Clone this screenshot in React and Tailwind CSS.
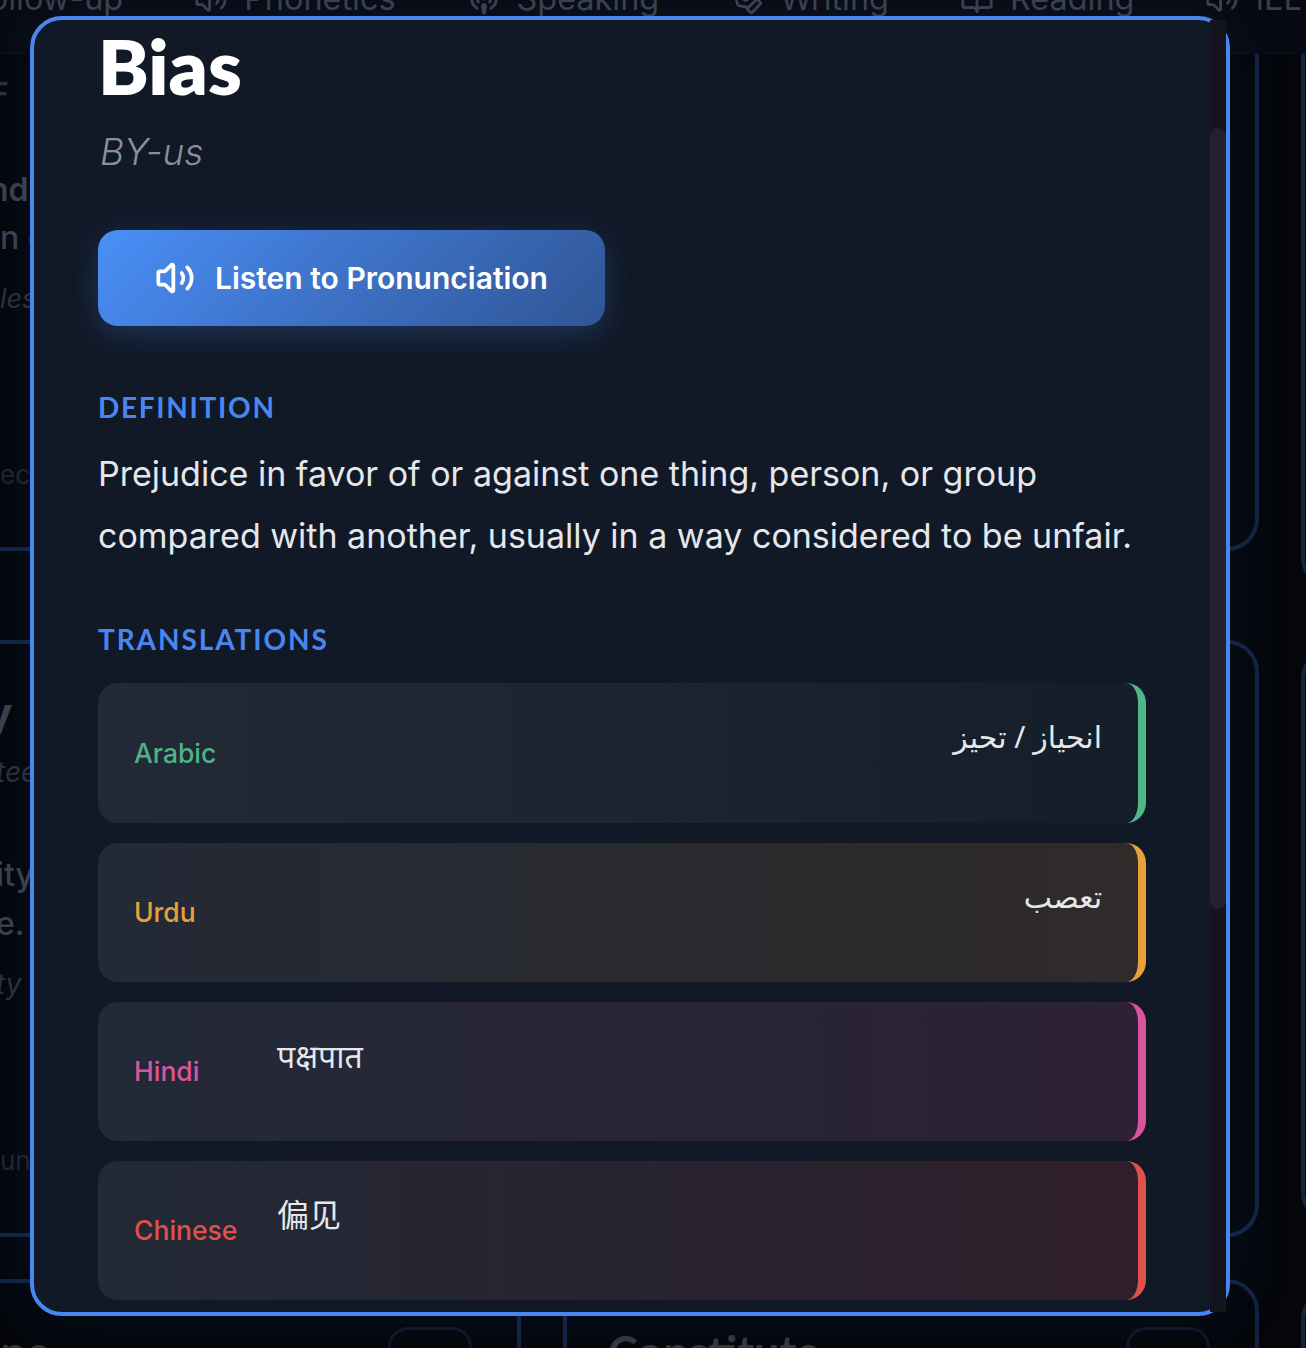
import React from "react";
import { Volume2, Podcast, PenTool, BookOpen } from "lucide-react";

const inter = "font-['Inter',sans-serif]";
const geo = "font-['Lato',sans-serif]";

const rows = [
  { lang: "Arabic", text: "انحياز / تحيز", rtl: true, size: "text-[30px]", label: "text-[#4fb286]", border: "border-[#52b788]", via: "via-[#1b2631]", bg: "to-[#141e28]", h: "h-[140px]" },
  { lang: "Urdu", text: "تعصب", rtl: true, size: "text-[30px]", label: "text-[#e8a13a]", border: "border-[#e8a13a]", via: "via-[#292a2f]", bg: "to-[#302b2b]", h: "h-[139px]" },
  { lang: "Hindi", text: "पक्षपात", rtl: false, size: "text-[32px]", label: "text-[#d9559e]", border: "border-[#d9559e]", via: "via-[#272538]", bg: "to-[#2d2037]", h: "h-[139px]" },
  { lang: "Chinese", text: "偏见", rtl: false, size: "text-[32px]", label: "text-[#e0514b]", border: "border-[#e0514b]", via: "via-[#272430]", bg: "to-[#2f1f2a]", h: "h-[139px]" },
];

const nav = [
  { t: "Follow-up" },
  { t: "Phonetics", I: Volume2 },
  { t: "Speaking", I: Podcast },
  { t: "Writing", I: PenTool },
  { t: "Reading", I: BookOpen },
  { t: "IELTS", I: Volume2 },
];

function Line({ children, cls }) {
  return <div className={`whitespace-nowrap ${cls}`}>{children}</div>;
}

function Card({ cls, children }) {
  return <div className={`rounded-[32px] border-[4px] border-[#12233f] shrink-0 ${cls}`}>{children}</div>;
}

function Pill() {
  return <div className="w-[84px] h-[60px] rounded-[20px] border-[3px] border-[#0c1727] shrink-0" />;
}

export default function App() {
  return (
    <div className={`relative h-[1348px] w-[1306px] overflow-hidden bg-[#04060b] ${inter}`}>
      <header className="relative z-10 h-[54px] bg-[#070a11] border-b border-[#0b0f17] overflow-hidden">
        <div className="flex items-center -mt-[21px] ml-[-29px] text-[32.4px] leading-[40px] text-[#3a3f4b] whitespace-nowrap">
          {nav.map(({ t, I }) => (
            <div key={t} className="flex items-center gap-[16px] mr-[71px]">
              {I && <I size={34} strokeWidth={2} />}
              <span>{t}</span>
            </div>
          ))}
        </div>
      </header>

      <main className="-mt-[40px] ml-[-175px] flex gap-[42px] w-[2200px]">
        <div className="w-[696px] flex flex-col shrink-0">
          <Card cls="h-[537px] pl-[171px] pt-[57px] text-[#3a3f4b]">
            <Line cls="-ml-[9px] text-[30px] leading-[36px] font-semibold text-[#2c3039]">F</Line>
            <Line cls="-ml-[11px] mt-[59px] text-[32px] leading-[40px] font-semibold">nd the</Line>
            <Line cls="mt-[8px] text-[32px] leading-[40px] font-medium">n c</Line>
            <Line cls="mt-[23px] text-[27px] leading-[36px] italic text-[#2c2f3c]">les</Line>
            <Line cls="mt-[140px] text-[26px] leading-[36px] text-[#20232d]">ect</Line>
          </Card>
          <Card cls="mt-[89px] h-[597px] pl-[171px] pt-[43px] text-[#3a3f4b]">
            <Line cls="text-[44px] leading-[52px] font-bold -ml-[14px]">y</Line>
            <Line cls="mt-[14px] text-[28px] leading-[38px] italic text-[#2c2f3c] -ml-[4px]">tee</Line>
            <Line cls="mt-[62px] text-[32px] leading-[44px] font-medium -ml-[4px]">ity</Line>
            <Line cls="mt-[5px] text-[32px] leading-[44px] font-medium -ml-[4px]">e.</Line>
            <Line cls="mt-[19px] text-[28px] leading-[38px] italic text-[#2c2f3c] -ml-[4px]">ty</Line>
            <Line cls="mt-[140px] text-[26px] leading-[36px] text-[#20232d]">un</Line>
          </Card>
          <Card cls="mt-[42px] h-[200px] pl-[47px] pr-[45px] pt-[44px] flex justify-between">
            <div className={`${geo} mt-[-3px] w-[174px] text-right text-[45px] leading-[56px] font-bold text-[#33363d]`}>Routine</div>
            <Pill />
          </Card>
        </div>
        <div className="w-[696px] flex flex-col shrink-0">
          <Card cls="h-[537px]" />
          <Card cls="mt-[89px] h-[597px]" />
          <Card cls="mt-[42px] h-[200px] pl-[41px] pr-[45px] pt-[44px] flex justify-between">
            <div className={`${geo} mt-[-3px] text-[45px] leading-[56px] font-bold text-[#33363d]`}>Constitute</div>
            <Pill />
          </Card>
        </div>
        <div className="w-[696px] flex flex-col shrink-0">
          <Card cls="h-[576px]" />
          <Card cls="mt-[57px] h-[577px]" />
          <Card cls="mt-[64px] h-[200px]" />
        </div>
      </main>

      {/* Dialog */}
      <div className="absolute left-[30px] top-[16px] w-[1200px] h-[1300px] rounded-[32px] border-[4px] border-[#4a86f0] bg-[#111826] shadow-[0_0_70px_rgba(74,134,240,0.09)] z-20">
        <div className="h-full overflow-hidden pl-[64px] pr-[80px] pt-[6px]">
          <h1 className={`${geo} text-[76px] leading-[80px] font-extrabold text-white`}>Bias</h1>
          <p className="ml-[2px] mt-[22px] text-[37px] leading-[48px] italic font-light text-[#8b8e9b]">BY-us</p>
          <button className="mt-[54px] h-[96px] w-[507px] rounded-[20px] flex items-center justify-center gap-[20px] bg-linear-135 from-[#4a8ff8] to-[#305595] text-white text-[30px] font-semibold shadow-[0_8px_32px_rgba(74,134,240,0.25)]">
            <Volume2 size={40} strokeWidth={2.25} />
            <span>Listen to Pronunciation</span>
          </button>
          <h2 className={`${geo} mt-[63px] text-[28px] leading-[36px] font-bold tracking-[1.7px] text-[#4a86f0]`}>DEFINITION</h2>
          <p className="mt-[18px] text-[34px] leading-[62px] text-[#e5e7eb]">
            Prejudice in favor of or against one thing, person, or group compared with another, usually in a way considered to be unfair.
          </p>
          <h2 className={`${geo} mt-[54px] text-[28px] leading-[36px] font-bold tracking-[1.9px] text-[#4a86f0]`}>TRANSLATIONS</h2>
          <div className="mt-[26px] flex flex-col gap-[20px]">
            {rows.map((r) => (
              <div key={r.lang} className={`${r.h} shrink-0 flex items-center rounded-[20px] border-r-8 ${r.border} bg-linear-to-r from-[#232936] ${r.via} ${r.bg} pl-[36px] pr-[36px]`}>
                <span className={`w-[143px] shrink-0 mt-[1px] text-[26.5px] font-medium ${r.label}`}>{r.lang}</span>
                <span
                  dir={r.rtl ? "rtl" : "ltr"}
                  className={`flex-1 -mt-[32px] ${r.size} leading-[40px] text-[#e5e7eb] font-['Noto_Sans','DejaVu_Sans','Noto_Sans_CJK_SC',sans-serif]`}
                >
                  {r.text}
                </span>
              </div>
            ))}
          </div>
        </div>
        <div className="absolute right-0 top-0 bottom-0 w-4 bg-[#14141e]">
          <div className="mt-[108px] h-[781px] rounded-lg bg-[#22222f]" />
        </div>
      </div>
    </div>
  );
}
